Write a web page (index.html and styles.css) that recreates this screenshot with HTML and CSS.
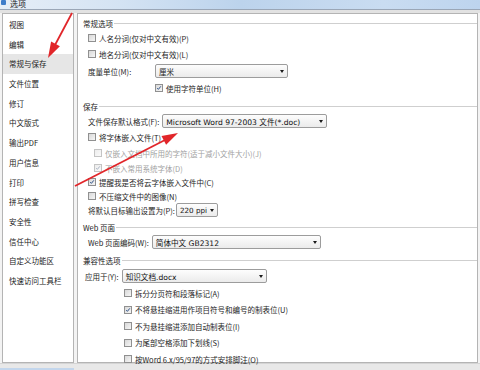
FILE: index.html
```html
<!DOCTYPE html>
<html lang="zh">
<head>
<meta charset="utf-8">
<title>选项</title>
<link rel="stylesheet" href="styles.css">
</head>
<body>
<div class="titlebar"><span class="ticon"></span><span class="ttext">选项</span></div>
<div class="tsep"></div>
<div class="main">
  <ul class="nav">
    <li>视图</li>
    <li>编辑</li>
    <li class="on">常规与保存</li>
    <li>文件位置</li>
    <li>修订</li>
    <li>中文版式</li>
    <li>输出PDF</li>
    <li>用户信息</li>
    <li>打印</li>
    <li>拼写检查</li>
    <li>安全性</li>
    <li>信任中心</li>
    <li>自定义功能区</li>
    <li>快速访问工具栏</li>
  </ul>
  <div class="panel">
    <div class="sec first"><span>常规选项</span></div>
    <div class="row"><span class="box"></span>人名分词(仅对中文有效)(P)</div>
    <div class="row"><span class="box"></span>地名分词(仅对中文有效)(L)</div>
    <div class="row tall"><span class="lab lab-m">度量单位(M):</span><span class="sel w133"><span>厘米</span></span></div>
    <div class="row sub"><span class="box chk"><svg viewBox="0 0 8 8"><path d="M1.6 4.2 L3.2 5.8 L6.4 1.8"/></svg></span>使用字符单位(H)</div>

    <div class="sec"><span>保存</span></div>
    <div class="row"><span class="lab">文件保存默认格式(F):</span><span class="sel w165"><span class="strong">Microsoft Word 97-2003 文件(*.doc)</span></span></div>
    <div class="row"><span class="box"></span>将字体嵌入文件(T)</div>
    <div class="row ind dis"><span class="box"></span>仅嵌入文档中所用的字符(适于减小文件大小)(J)</div>
    <div class="row s ind dis"><span class="box chk"><svg viewBox="0 0 8 8"><path d="M1.6 4.2 L3.2 5.8 L6.4 1.8"/></svg></span>不嵌入常用系统字体(D)</div>
    <div class="row s"><span class="box chk"><svg viewBox="0 0 8 8"><path d="M1.6 4.2 L3.2 5.8 L6.4 1.8"/></svg></span>提醒我是否将云字体嵌入文件中(C)</div>
    <div class="row s"><span class="box"></span>不压缩文件中的图像(N)</div>
    <div class="row s"><span class="lab lab-p">将默认目标输出设置为(P):</span><span class="sel w42"><span class="strong">220 ppi</span></span></div>

    <div class="sec"><span>Web 页面</span></div>
    <div class="row"><span class="lab">Web 页面编码(W):</span><span class="sel w169"><span class="strong">简体中文 GB2312</span></span></div>

    <div class="sec"><span>兼容性选项</span></div>
    <div class="row tall apply"><span class="lab">应用于(Y):</span><span class="sel w145"><span class="strong">知识文档.docx</span></span></div>
    <div class="row c compat"><span class="box"></span>拆分分页符和段落标记(A)</div>
    <div class="row c compat"><span class="box chk"><svg viewBox="0 0 8 8"><path d="M1.6 4.2 L3.2 5.8 L6.4 1.8"/></svg></span>不将悬挂缩进用作项目符号和编号的制表位(U)</div>
    <div class="row c compat"><span class="box"></span>不为悬挂缩进添加自动制表位(I)</div>
    <div class="row c compat"><span class="box"></span>为尾部空格添加下划线(S)</div>
    <div class="row c compat"><span class="box"></span>按Word 6.x/95/97的方式安排脚注(O)</div>
  </div>
</div>
<div class="bottom"><span class="bbtn"></span></div>
<svg class="arrows" viewBox="0 0 480 370" width="480" height="370">
  <line x1="72" y1="13" x2="55" y2="45" class="arl"/>
  <polygon points="48,58 59.9,46.3 51.1,41.5" class="arh"/>
  <line x1="75" y1="186" x2="165" y2="140" class="arl"/>
  <polygon points="178,133 166.1,144.7 161.5,135.9" class="arh"/>
</svg>
</body>
</html>
```
FILE: styles.css
```css
html, body {
  margin: 0;
  padding: 0;
}
body {
  width: 480px;
  height: 370px;
  overflow: hidden;
  position: relative;
  background: #f3f3f3;
  font-family: "Noto Sans CJK SC", "Noto Sans", sans-serif;
  font-size: 7.5px;
  color: #1e1e1e;
}
.titlebar {
  height: 9px;
  display: flex;
  align-items: flex-start;
  background: linear-gradient(90deg, #e6eef7 0, #d4e3f3 25%, #bcd3ec 50%, #c9dcf1 80%, #bdd4ee 100%);
  overflow: hidden;
}
.ticon {
  width: 5px;
  height: 5px;
  background: #3f7dc9;
  border-radius: 1px;
  margin: 0 4px 0 1px;
}
.ttext {
  font-size: 8px;
  line-height: 7px;
  color: #222;
}
.tsep {
  height: 3px;
  border-top: 1px solid #9aa6b6;
  background: #e2e2e2;
}
.main {
  display: flex;
  gap: 3px;
  padding: 0 2px;
  height: 350px;
}
.nav {
  width: 72px;
  box-sizing: border-box;
  margin: 0;
  padding: 1px 0 0;
  list-style: none;
  background: #fff;
  border: 1px solid #b4b4b4;
}
.nav li {
  height: 19.7px;
  line-height: 19.7px;
  padding-left: 6px;
  color: #222;
}
.nav li.on {
  background: #e6e6e6;
}
.panel {
  flex: 1;
  box-sizing: border-box;
  background: #fff;
  border: 1px solid #b4b4b4;
  padding-top: 2px;
}
.sec {
  display: flex;
  align-items: center;
  height: 14px;
  padding-left: 5px;
  margin-top: 3px;
  color: #222;
}
.sec.first {
  margin-top: 0;
}
.sec::after {
  content: "";
  flex: 1;
  border-top: 1px solid #cfcfcf;
  margin-left: 1px;
}
.row {
  display: flex;
  align-items: center;
  height: 16px;
  padding-left: 10px;
  white-space: nowrap;
}
.row.s { height: 14px; }
.row.tall { height: 18px; }
.row.c { height: 16.5px; }
.row.ind { padding-left: 16px; }
.row.sub { padding-left: 77px; }
.row.compat { padding-left: 46px; }
.row.apply { padding-left: 7px; }
.row.dis { color: #a2a2a2; }
.box {
  width: 8px;
  height: 8px;
  box-sizing: border-box;
  border: 1px solid #909090;
  background: linear-gradient(135deg, #d8d8d8, #f6f6f6);
  margin-right: 3px;
  flex: none;
  display: flex;
}
.dis .box {
  border-color: #c4c4c4;
  background: linear-gradient(135deg, #ececec, #fafafa);
}
.box svg {
  width: 6px;
  height: 6px;
}
.box svg path {
  fill: none;
  stroke: #2c4f86;
  stroke-width: 1.3;
}
.dis .box svg path {
  stroke: #a8b2c2;
}
.lab {
  margin-right: 3px;
}
.lab-m {
  width: 64px;
}
.lab-p {
  margin-right: 1px;
}
.sel {
  height: 14px;
  box-sizing: border-box;
  border: 1px solid #9c9c9c;
  border-radius: 2px;
  background: linear-gradient(#fdfdfd, #ebebeb);
  display: flex;
  align-items: center;
  justify-content: space-between;
  gap: 2px;
  padding: 0 3px 0 3px;
  overflow: hidden;
  flex: none;
}
.sel::after {
  content: "";
  border-left: 2px solid transparent;
  border-right: 2px solid transparent;
  border-top: 3px solid #1a1a1a;
  flex: none;
}
.strong {
  font-family: "DejaVu Sans", "Noto Sans CJK SC", sans-serif;
  font-size: 7.6px;
  color: #111;
}
.w42 .strong {
  font-size: 7.2px;
}
.w133 { width: 133px; }
.w165 { width: 165px; }
.w42 { width: 42px; }
.w169 { width: 169px; }
.w145 { width: 145px; }
.bottom {
  height: 7px;
  background: #e8e8e8;
  border-top: 1px solid #d4d4d4;
  box-sizing: border-box;
  display: flex;
  align-items: flex-end;
}
.bbtn {
  width: 74px;
  height: 2px;
  background: #c3d6ec;
}
.arrows {
  position: absolute;
  left: 0;
  top: 0;
  pointer-events: none;
}
.arl {
  stroke: #e1262a;
  stroke-width: 1.8;
}
.arh {
  fill: #e1262a;
}
```
